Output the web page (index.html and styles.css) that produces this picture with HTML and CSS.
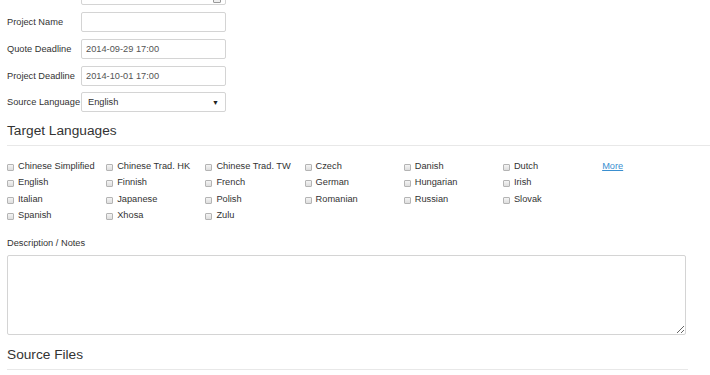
FILE: index.html
```html
<!DOCTYPE html>
<html lang="en">
<head>
    <meta charset="UTF-8">
    <meta name="viewport" content="width=device-width, initial-scale=1.0">
    <title>New Project</title>
    <link rel="stylesheet" href="styles.css">
</head>
<body>
    <div class="container">
        <form>
            <div class="form-row first">
                <label for="client">Client</label>
                <div class="field">
                    <input type="text" id="client">
                    <span class="field-icon"></span>
                </div>
            </div>
            <div class="form-row">
                <label for="project-name">Project Name</label>
                <input type="text" id="project-name">
            </div>
            <div class="form-row">
                <label for="quote-deadline">Quote Deadline</label>
                <input type="text" id="quote-deadline" value="2014-09-29 17:00">
            </div>
            <div class="form-row">
                <label for="project-deadline">Project Deadline</label>
                <input type="text" id="project-deadline" value="2014-10-01 17:00">
            </div>
            <div class="form-row">
                <label for="source-language">Source Language</label>
                <div class="select-box" id="source-language">
                    <span>English</span>
                    <span class="arrow">&#9660;</span>
                </div>
            </div>

            <h2 class="section-title wide">Target Languages</h2>
            <div class="lang-grid">
                <label class="lang"><input type="checkbox">Chinese Simplified</label>
                <label class="lang"><input type="checkbox">Chinese Trad. HK</label>
                <label class="lang"><input type="checkbox">Chinese Trad. TW</label>
                <label class="lang"><input type="checkbox">Czech</label>
                <label class="lang"><input type="checkbox">Danish</label>
                <label class="lang"><input type="checkbox">Dutch</label>
                <a href="#" class="more">More</a>
                <label class="lang"><input type="checkbox">English</label>
                <label class="lang"><input type="checkbox">Finnish</label>
                <label class="lang"><input type="checkbox">French</label>
                <label class="lang"><input type="checkbox">German</label>
                <label class="lang"><input type="checkbox">Hungarian</label>
                <label class="lang"><input type="checkbox">Irish</label>
                <span></span>
                <label class="lang"><input type="checkbox">Italian</label>
                <label class="lang"><input type="checkbox">Japanese</label>
                <label class="lang"><input type="checkbox">Polish</label>
                <label class="lang"><input type="checkbox">Romanian</label>
                <label class="lang"><input type="checkbox">Russian</label>
                <label class="lang"><input type="checkbox">Slovak</label>
                <span></span>
                <label class="lang"><input type="checkbox">Spanish</label>
                <label class="lang"><input type="checkbox">Xhosa</label>
                <label class="lang"><input type="checkbox">Zulu</label>
            </div>

            <label class="notes-label" for="notes">Description / Notes</label>
            <textarea id="notes"></textarea>

            <h2 class="section-title narrow">Source Files</h2>
        </form>
    </div>
</body>
</html>
```

FILE: styles.css
```css
body {
    margin: 0;
    background-color: #fff;
    color: #333;
    font-family: "Liberation Sans", Arial, sans-serif;
    font-size: 9.25px;
    overflow: hidden;
}
.container {
    padding-left: 7px;
}
.form-row {
    display: flex;
    align-items: center;
    height: 20px;
    margin-bottom: 6.75px;
}
.form-row.first {
    margin-top: -14.75px;
}
.form-row label {
    width: 74px;
    color: #333;
}
.form-row input,
.field,
.select-box {
    width: 145px;
    height: 20px;
    box-sizing: border-box;
}
.form-row input {
    border: 1px solid #d4d4d4;
    border-radius: 2px;
    padding: 0 4px;
    font-family: inherit;
    font-size: 9.25px;
    color: #555;
    background: #fff;
    outline: none;
}
.field {
    position: relative;
}
.field input {
    width: 100%;
}
.field-icon {
    position: absolute;
    right: 5px;
    top: 11px;
    width: 6px;
    height: 5px;
    border: 1px solid #999;
    border-radius: 1px;
    background: #eee;
}
.select-box {
    display: flex;
    align-items: center;
    justify-content: space-between;
    border: 1px solid #d4d4d4;
    border-radius: 2px;
    padding: 0 6px 0 6px;
    color: #333;
}
.select-box .arrow {
    font-size: 7px;
    color: #222;
}
.section-title {
    margin: 0;
    font-weight: normal;
    font-size: 13.7px;
    line-height: 16px;
    color: #333;
    padding-bottom: 6px;
    border-bottom: 1px solid #e8e8e8;
}
.section-title.wide {
    margin-top: 10.75px;
}
.section-title.narrow {
    margin-top: 12px;
    width: 681px;
}
.lang-grid {
    display: grid;
    grid-template-columns: repeat(7, 99.2px);
    margin-top: 12px;
}
.lang {
    display: flex;
    align-items: center;
    height: 16.3px;
    white-space: nowrap;
    color: #333;
}
.lang input {
    appearance: none;
    -webkit-appearance: none;
    width: 7px;
    height: 7px;
    margin: 3px 4px 0 0;
    border: 1px solid #b4b4b4;
    border-radius: 1px;
    background: linear-gradient(#f4f4f4, #dedede);
    box-sizing: border-box;
    flex-shrink: 0;
}
.more {
    line-height: 16.3px;
    color: #3a8fd0;
    text-decoration: underline;
}
.notes-label {
    display: block;
    margin-top: 14px;
    line-height: 12px;
}
textarea {
    display: block;
    margin-top: 6px;
    width: 679px;
    height: 80px;
    box-sizing: border-box;
    border: 1px solid #d4d4d4;
    border-radius: 2px;
    font-family: inherit;
    font-size: 9.25px;
    resize: both;
}
```
